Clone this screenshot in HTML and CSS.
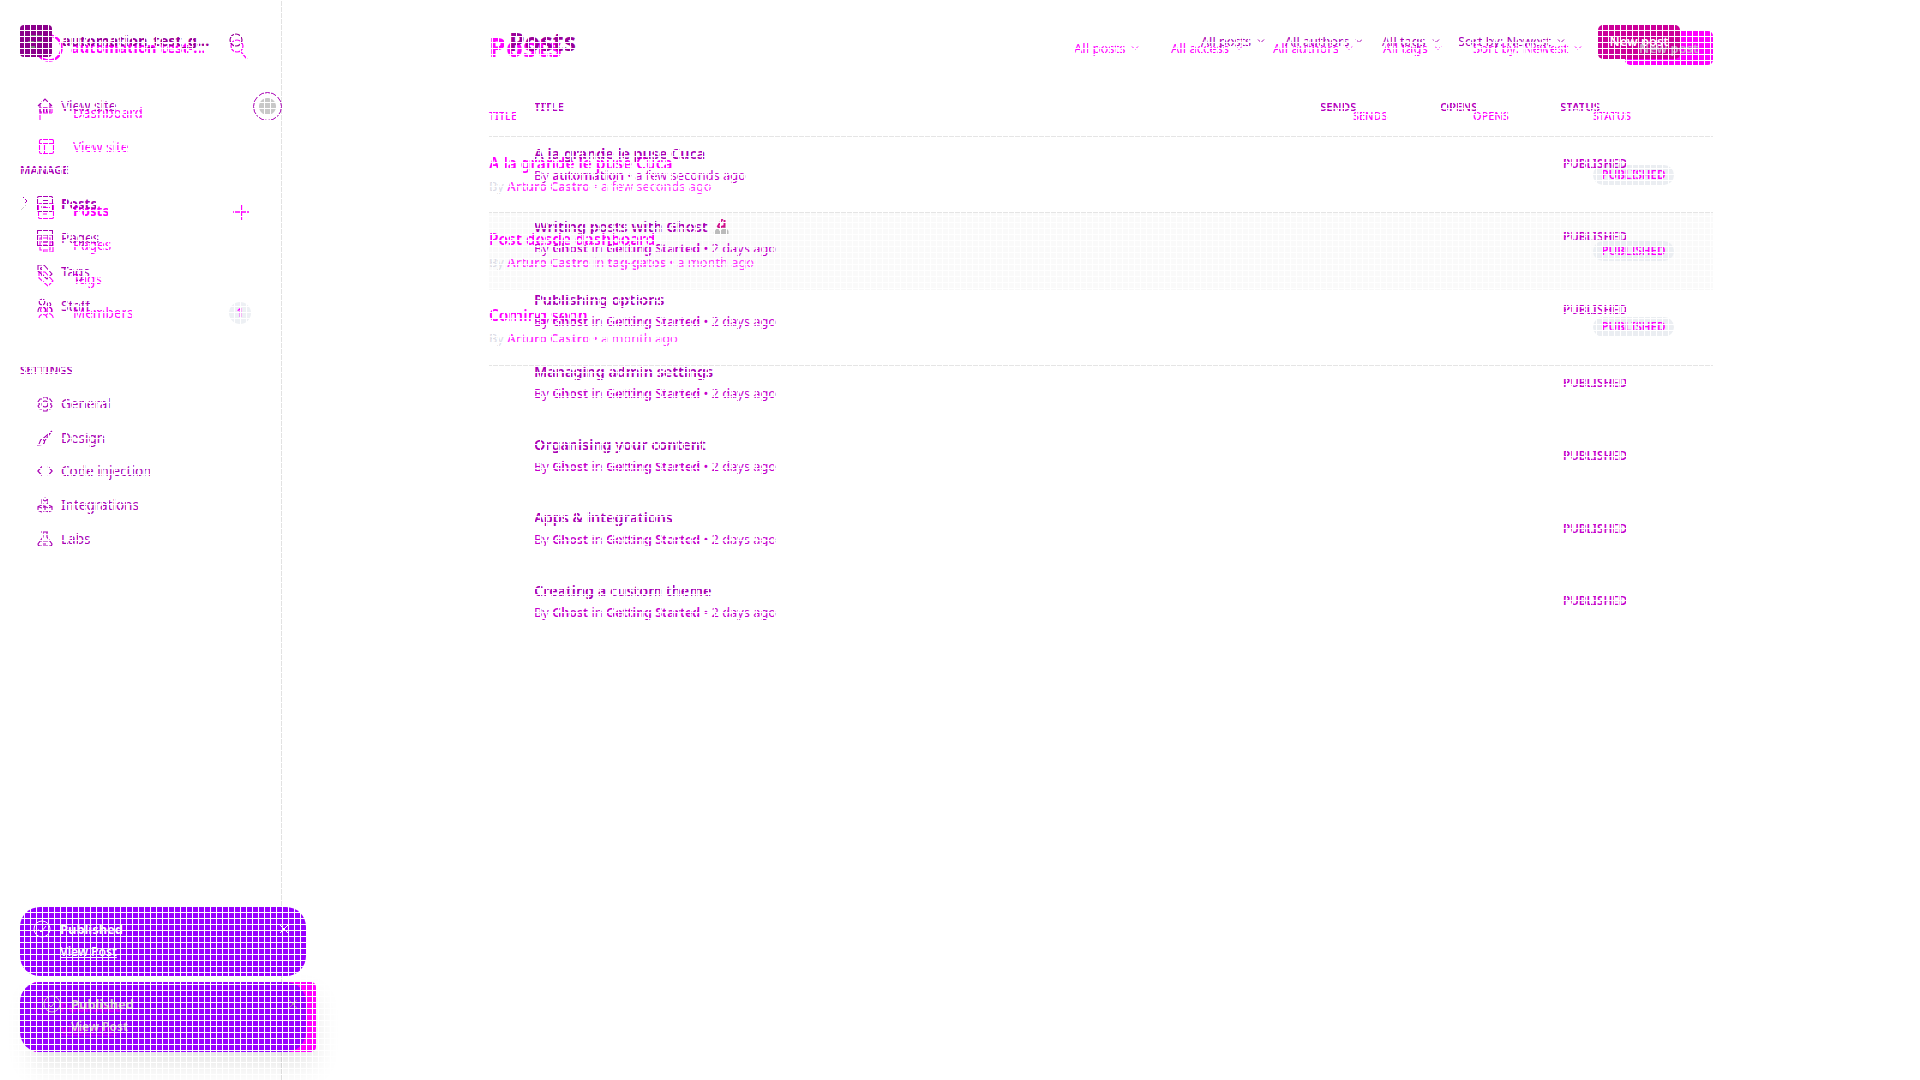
FILE: index.html
```html
<!DOCTYPE html>
<html lang="en">
<head>
<meta charset="utf-8">
<title>Posts</title>
<link rel="stylesheet" href="styles.css">
</head>
<body>
<svg class="defs" aria-hidden="true">
  <symbol id="house" viewBox="0 0 16 16"><path d="M1 8 8 1l7 7M3 6.500V14h3.500v-4h3v4H13V6.500"/></symbol>
  <symbol id="dash" viewBox="0 0 16 16"><path d="M2 15V3h12v5M6 3v5M10 3v5M2 8h12"/></symbol>
  <symbol id="panel" viewBox="0 0 16 16"><rect x="1.500" y=".5" width="14" height="14" rx="1.500"/><path d="M1.500 4.500h14M6.500 4.500v10"/></symbol>
  <symbol id="post" viewBox="0 0 16 16"><rect x=".5" y=".5" width="15" height="15" rx="1.500"/><path d="M5 4.500h7M5 7.500h7M4 11h5"/></symbol>
  <symbol id="page" viewBox="0 0 16 16"><path d="M.5.5h15v15H.5zM.5 5h15M5 5v7h6V5"/></symbol>
  <symbol id="pages" viewBox="0 0 16 16"><path d="M2 1h10v12H2zM5 13v2h10V5h-3M5 5h4M5 8h4"/></symbol>
  <symbol id="tag" viewBox="0 0 16 16"><path d="M1 1h6l8 9-5 5-9-8z"/><circle cx="4.500" cy="4.500" r="1"/></symbol>
  <symbol id="staff" viewBox="0 0 16 16"><circle cx="5" cy="4" r="2.800"/><path d="M1 14c0-7 8-7 8 0M10 9c3-1 5 1 5 5"/><circle cx="12" cy="6.500" r="1.800"/></symbol>
  <symbol id="members" viewBox="0 0 16 16"><circle cx="5" cy="5" r="2.500"/><circle cx="11.500" cy="5" r="2.500"/><path d="M1 14c0-6 8-6 8 0M8 10c3-3 7-1 7.500 4"/></symbol>
  <symbol id="gear" viewBox="0 0 16 16"><circle cx="8" cy="8" r="3"/><path d="M6 1h4l.5 2L13 3l2 3-1.500 2 1.500 2-2 3-2.500 0L10 15H6l-.5-2L3 13l-2-3 1.500-2L1 6l2-3 2.500 0z"/></symbol>
  <symbol id="brush" viewBox="0 0 16 16"><path d="M15 1 5.500 9l2 2L15 1M5.500 9C2 9 4 13 1 15c4 0 7-1 6.500-4"/></symbol>
  <symbol id="code" viewBox="0 0 16 16"><path d="M5 3.500.8 8 5 12.500M11 3.500 15.200 8 11 12.500"/></symbol>
  <symbol id="cubes" viewBox="0 0 16 16"><path d="M8 1l3 1.500v4L8 8 5 6.500v-4zM4.500 8 8 9.500v4L4.500 15 1 13.500v-4zM11.500 8 15 9.500v4L11.500 15 8 13.500M5 2.500 8 4l3-1.500M1 9.500 4.500 11 8 9.500l3.500 1.500L15 9.500"/></symbol>
  <symbol id="flask" viewBox="0 0 16 16"><path d="M4 1h8M6 1v5L1 13q0 2 2 2h10q2 0 2-2l-5-7V1M3.500 10h9M6 13h3"/></symbol>
  <symbol id="chev" viewBox="0 0 8 8"><path d="M1 2.500 4 5.500l3-3"/></symbol>
  <symbol id="check" viewBox="0 0 18 18"><circle cx="9" cy="9" r="8"/><path d="M5.500 9.500 8 12l5-6"/></symbol>
  <symbol id="cross" viewBox="0 0 10 10"><path d="M1 1l8 8M9 1 1 9"/></symbol>
</svg>

<div class="stage">
  <div class="layer new">
    <aside class="side">
      <div class="site"><svg class="ring" viewBox="0 0 28 28"><circle cx="14" cy="14" r="12.500"/></svg><b class="site-name">automation test-...</b>
        <svg class="search" viewBox="0 0 20 24"><circle cx="8" cy="8" r="6"/><path d="M12 14l6 7"/></svg></div>
      <div class="nav"><svg class="ic"><use href="#dash"/></svg>Dashboard</div>
      <div class="nav"><svg class="ic"><use href="#panel"/></svg>View site</div>
      <div class="gap"></div>
      <div class="nav current"><svg class="ic"><use href="#post"/></svg>Posts<svg class="plus" viewBox="0 0 16 16"><path d="M8.500 0v16M0 8h16"/></svg></div>
      <div class="nav"><svg class="ic"><use href="#pages"/></svg>Pages</div>
      <div class="nav"><svg class="ic"><use href="#tag"/></svg>Tags</div>
      <div class="nav"><svg class="ic"><use href="#members"/></svg>Members<span class="count">1</span></div>
    </aside>
    <main class="main">
      <header class="head"><h1>Posts</h1>
        <span class="filter">All posts<svg><use href="#chev"/></svg></span><span class="filter">All access<svg><use href="#chev"/></svg></span><span class="filter">All authors<svg><use href="#chev"/></svg></span><span class="filter">All tags<svg><use href="#chev"/></svg></span><span class="filter">Sort by: Newest<svg><use href="#chev"/></svg></span><span class="btn"></span></header>
      <div class="cols thead"><span>TITLE</span><span>SENDS</span><span>OPENS</span><span>STATUS</span></div>
      <div class="cols row"><div><h3>A la grande le puse Cuca</h3><p><i>By</i> <b>Arturo Castro</b> • a few seconds ago</p></div><span class="status">PUBLISHED</span></div>
      <div class="cols row hover"><div><h3>Post desde dashboard</h3><p><i>By</i> <b>Arturo Castro</b> in <b>tag-gatos</b> • a month ago</p></div><span class="status">PUBLISHED</span></div>
      <div class="cols row"><div><h3>Coming soon</h3><p><i>By</i> <b>Arturo Castro</b> • a month ago</p></div><span class="status">PUBLISHED</span></div>
      <div class="end"></div>
    </main>
  </div>

  <div class="layer old">
    <aside class="side">
      <div class="site"><svg class="logo" viewBox="0 0 32 32"><rect width="32" height="32" rx="4"/><path d="M10 11h13M8 17h6M17 17h6M10 22h5"/></svg><b class="site-name">automation_test_g...</b>
        <svg class="search" viewBox="0 0 20 24"><circle cx="8" cy="8" r="6"/></svg></div>
      <div class="nav"><svg class="ic"><use href="#house"/></svg>View site<span class="globe"></span></div>
      <h4 class="manage">MANAGE</h4>
      <div class="nav current"><svg class="arrow" viewBox="0 0 8 16"><path d="M3 1l4 4-4 4"/><path class="pale" d="M1 14l5-5"/></svg><svg class="ic"><use href="#post"/></svg>Posts</div>
      <div class="nav"><svg class="ic"><use href="#page"/></svg>Pages</div>
      <div class="nav"><svg class="ic"><use href="#tag"/></svg>Tags</div>
      <div class="nav"><svg class="ic"><use href="#staff"/></svg>Staff</div>
      <h4 class="settings">SETTINGS</h4>
      <div class="nav"><svg class="ic"><use href="#gear"/></svg>General</div>
      <div class="nav"><svg class="ic"><use href="#brush"/></svg>Design</div>
      <div class="nav"><svg class="ic"><use href="#code"/></svg>Code injection</div>
      <div class="nav"><svg class="ic"><use href="#cubes"/></svg>Integrations</div>
      <div class="nav"><svg class="ic"><use href="#flask"/></svg>Labs</div>
    </aside>
    <main class="main">
      <header class="head"><h1>Posts</h1>
        <span class="filter">All posts<svg><use href="#chev"/></svg></span><span class="filter">All authors<svg><use href="#chev"/></svg></span><span class="filter">All tags<svg><use href="#chev"/></svg></span><span class="filter">Sort by: Newest<svg><use href="#chev"/></svg></span><span class="btn">New post</span></header>
      <div class="cols thead"><span>TITLE</span><span>SENDS</span><span>OPENS</span><span>STATUS</span></div>
      <div class="cols row"><div><h3>A la grande le puse Cuca</h3><p>By <b>automation</b> • a few seconds ago</p></div><span class="status">PUBLISHED</span></div>
      <div class="cols row"><div><h3>Writing posts with Ghost <svg class="boat" viewBox="0 0 16 16"><path class="sail" d="M9 0 4 8M11 1v8M4 9l7-2"/><path class="hull" d="M0 14l4-6 2 4 6-4 3 4v3H1z"/></svg></h3><p>By <b>Ghost</b> in <b>Getting Started</b> • 2 days ago</p></div><span class="status">PUBLISHED</span></div>
      <div class="cols row"><div><h3>Publishing options</h3><p>By <b>Ghost</b> in <b>Getting Started</b> • 2 days ago</p></div><span class="status">PUBLISHED</span></div>
      <div class="cols row"><div><h3>Managing admin settings</h3><p>By <b>Ghost</b> in <b>Getting Started</b> • 2 days ago</p></div><span class="status">PUBLISHED</span></div>
      <div class="cols row"><div><h3>Organising your content</h3><p>By <b>Ghost</b> in <b>Getting Started</b> • 2 days ago</p></div><span class="status">PUBLISHED</span></div>
      <div class="cols row"><div><h3>Apps &amp; integrations</h3><p>By <b>Ghost</b> in <b>Getting Started</b> • 2 days ago</p></div><span class="status">PUBLISHED</span></div>
      <div class="cols row"><div><h3>Creating a custom theme</h3><p>By <b>Ghost</b> in <b>Getting Started</b> • 2 days ago</p></div><span class="status">PUBLISHED</span></div>
    </main>
  </div>

  <div class="btn-label">New post</div>

  <div class="toasts">
    <div class="toast"><svg class="check"><use href="#check"/></svg><div><b>Published</b><u>View Post</u></div><svg class="cross"><use href="#cross"/></svg></div>
    <div class="pair">
      <div class="slab"></div>
      <div class="toast ghosted"><svg class="check"><use href="#check"/></svg><div><b>Published</b><u>View Post</u></div></div>
      <div class="toast shifted"><svg class="check"><use href="#check"/></svg><div><b>Published</b><u>View Post</u></div><svg class="cross"><use href="#cross"/></svg></div>
    </div>
  </div>
  <div class="mesh"></div>
</div>
</body>
</html>
```
FILE: styles.css
```css
* { box-sizing: border-box; }
body { margin: 0; background: #fff; font-family: "Noto Sans", sans-serif; overflow: hidden; }
h1, h3, h4, p { margin: 0; }
svg { fill: none; stroke: currentColor; flex: none; }
.defs { position: absolute; width: 0; height: 0; }

.stage { display: grid; width: 1920px; height: 1080px; position: relative; }
.layer, .mesh { grid-area: 1 / 1; }
.layer { display: flex; height: 1080px; }
.mesh {
  position: relative; z-index: 5; pointer-events: none;
  background:
    repeating-linear-gradient(90deg, #fff 0 1px, transparent 1px 6px),
    repeating-linear-gradient(0deg, transparent 0 5px, #fff 5px 6px);
}
.old { color: #a800b4; }
.new { color: #f0f; }

/* sidebar */
.side { width: 282px; flex: none; padding-left: 20px; }
.old .side { padding-top: 25px; border-right: 1px solid #e2e2e2; }
.new .side { padding-top: 31px; }
.site { display: flex; font-size: 14.500px; }
.site-name { white-space: nowrap; }
.old .site { height: 32px; margin-bottom: 32px; color: #909; }
.new .site { height: 34px; margin-bottom: 31px; padding-left: 15px; }
.logo { width: 32px; height: 32px; margin-right: 10px; fill: #8b008b; stroke: none; }
.logo path { stroke: #777; stroke-width: 2; }
.old .site-name { width: 166px; line-height: 31px; }
.ring { width: 28px; height: 28px; margin: 3px 8px 0 0; stroke-width: 2.500; }
.new .site-name { width: 158px; line-height: 32px; }
.search { width: 20px; height: 24px; margin-top: 7px; stroke-width: 1.200; }
.nav { display: flex; align-items: center; height: 34px; padding-left: 17px; gap: 8px; font-size: 13.500px; white-space: nowrap; }
.new .nav { padding-left: 18px; gap: 19px; }
.ic { width: 16px; height: 16px; stroke-width: 1.100; }
.current { font-weight: 700; }
.gap { height: 30px; }
h4 { font-size: 11.200px; line-height: 20px; height: 20px; font-weight: 600; }
.manage { margin: 37px 0 7px; }
.settings { margin: 37px 0 7px; }
.settings ~ .nav { height: 33.800px; }
.arrow { width: 8px; height: 16px; margin-left: -18px; }
.old .current { padding-left: 18px; }
.old .current .ic { margin-left: 1px; }
.pale { stroke: #ccc; }
.globe { width: 29px; height: 29px; margin-left: auto; border: 1.500px solid #a800b4; border-radius: 50%; background: radial-gradient(circle, #c8c8c8 0 8px, transparent 9px); }
.old .globe { margin-right: -1px; }
.plus { width: 16px; height: 16px; margin: 1px 0 0 105px; stroke-width: 1.300; }
.count { width: 22px; height: 22px; margin: 0 31px 0 auto; border-radius: 50%; background: #edf0f4; text-align: center; font-size: 12px; line-height: 22px; font-weight: 600; }

/* header */
.head { display: grid; height: 34px; font-size: 12.700px; white-space: nowrap; align-items: center; }
.old .main { padding: 25px 0 0 252px; }
.new .main { padding: 31px 0 0 207px; }
.old .head { margin-left: -25px; grid-template-columns: 692px 84px 97px 76px 140px 82px; }
.new .head { grid-template-columns: 585px 97px 102px 110px 90px 152px 88px; font-size: 13px; }
.old h1 { font-size: 25px; line-height: 34px; color: #909; margin-top: -3px; }
.new h1 { font-size: 27.200px; line-height: 34px; margin-top: -2px; }
.filter { display: flex; align-items: center; gap: 6px; line-height: 18px; }
.old .filter { margin-top: -2px; }
.filter svg { width: 8px; height: 8px; }
.btn { height: 34px; border-radius: 5px; text-align: center; font-size: 12.900px; font-weight: 600; line-height: 33px; color: #fff; }
.old .btn { background: #c09; }
.new .btn { background: #f0f; }
.btn-label { position: absolute; left: 1639px; top: 38px; font-size: 12.900px; line-height: 20px; font-weight: 600; color: #c9a5c9; }

/* list */
.cols { display: grid; align-items: center; }
.old .cols { grid-template-columns: 786px 120px 120px 120px; }
.new .cols { grid-template-columns: 864px 120px 120px 120px; }
.thead { height: 20px; font-size: 11.400px; line-height: 20px; font-weight: 600; }
.old .thead { margin: 38px 0 11px; color: #b400bc; }
.new .thead { margin: 41px 0 10px; font-size: 10.900px; font-weight: 500; }
.row > .status { grid-column: 4; }
.old .row { height: 72.850px; }
.new .row { height: 76.400px; border-top: 1px solid #e5e5e5; }
.row h3 { font-weight: 600; white-space: nowrap; }
.old h3 { font-size: 14.400px; line-height: 22px; }
.new h3 { font-size: 15.450px; line-height: 24px; margin-top: -1px; }
.row p { font-size: 12.800px; line-height: 22px; color: #c400cc; }
.old .row p { line-height: 21px; }
.new .row p { color: #f3f; }
.row p b { font-weight: 600; font-size: 12.500px; }
.new .row p b { font-size: 12.500px; }
.row i { font-style: normal; color: #dcdce6; }
.hover { background: #fafafa; }
.new .row.hover + .row { border-top-color: #f8f8f8; }
.end { width: 1224px; border-top: 1px solid #e5e5e5; }
.status { font-size: 11.600px; font-weight: 600; line-height: 20px; }
.old .status { padding-left: 3px; color: #c400cc; }
.new .status { width: 81px; border-radius: 10px; text-align: center; background: #ebeef2; }
.boat { width: 17px; height: 16px; margin-left: 2px; vertical-align: -3px; stroke: none; }
.sail { stroke: #d0108c; stroke-width: 2; }
.hull { fill: #bbb; }

/* notifications */
.toasts { position: absolute; left: 20px; top: 907px; width: 296px; }
.toast { display: flex; width: 286px; height: 69px; padding: 12px 17px 0 13px; border-radius: 20px; background: #90f; color: #fff; }
.toast div { display: flex; flex-direction: column; width: 219px; margin-left: 9px; }
.toast b { font-size: 12.900px; line-height: 20px; }
.toast u { font-size: 12.100px; line-height: 22px; font-weight: 600; margin-top: 2px; }
.check { width: 18px; height: 18px; margin-top: 1px; }
.toast .cross { width: 10px; height: 10px; margin: 5px -10px 0 0; }
.pair { display: grid; height: 70px; margin-top: 6px; }
.pair > * { grid-area: 1 / 1; height: 70px; }
.slab { margin-left: 11px; background: #f0f; border-radius: 5px; box-shadow: 0 14px 26px rgba(0,0,0,.1); }
.ghosted { padding-top: 15px; color: #d400f5; }
.shifted { background: none; width: 296px; padding-left: 23px; padding-top: 12px; color: #d0c4c8; }
.toast.shifted div { margin-left: 10px; width: 217px; }
.shifted u { text-decoration: none; }
.shifted .cross { color: #a67ba6; }
```
